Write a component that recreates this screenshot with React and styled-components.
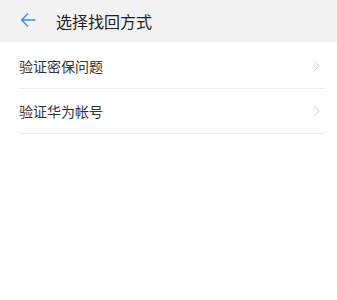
import React from "react";
import styled, { createGlobalStyle } from "styled-components";

const Global = createGlobalStyle`
  html, body { margin: 0; padding: 0; background: #fff; }
  body { font-family: "Noto Sans CJK SC", "Noto Sans", sans-serif; }
`;

const Page = styled.div`
  width: 337px;
  height: 300px;
  background: #fff;
`;

const Header = styled.div`
  height: 42px;
  background: #f2f2f2;
  display: flex;
  align-items: center;
  padding-left: 20px;
  box-sizing: border-box;
`;

const BackIcon = styled.svg`
  width: 16px;
  height: 14px;
  flex: none;
  margin-top: -2px;
`;

const Title = styled.div`
  margin-left: 20px;
  font-size: 16px;
  color: #222;
  line-height: 1;
  margin-top: 0px;
`;

const List = styled.div`
  padding: 2px 12px 0 19px;
`;

const Row = styled.div`
  height: 44px;
  display: flex;
  align-items: center;
  justify-content: space-between;
  border-bottom: 1px solid #ececec;
`;

const Label = styled.span`
  font-size: 14px;
  color: #333;
`;

const Chevron = styled.svg`
  width: 7px;
  height: 12px;
  margin-right: 5px;
`;

const items = ["验证密保问题", "验证华为帐号"];

export default function App() {
  return (
    <Page>
      <Global />
      <Header>
        <BackIcon viewBox="0 0 16 14">
          <path d="M15 7H1.5M7.5 1L1.5 7l6 6" fill="none" stroke="#3a8ee6" strokeWidth="1.4" strokeLinecap="round" strokeLinejoin="round" />
        </BackIcon>
        <Title>选择找回方式</Title>
      </Header>
      <List>
        {items.map((t) => (
          <Row key={t}>
            <Label>{t}</Label>
            <Chevron viewBox="0 0 7 12">
              <path d="M1 1l5 5-5 5" fill="none" stroke="#cfcfcf" strokeWidth="1" />
            </Chevron>
          </Row>
        ))}
      </List>
    </Page>
  );
}
